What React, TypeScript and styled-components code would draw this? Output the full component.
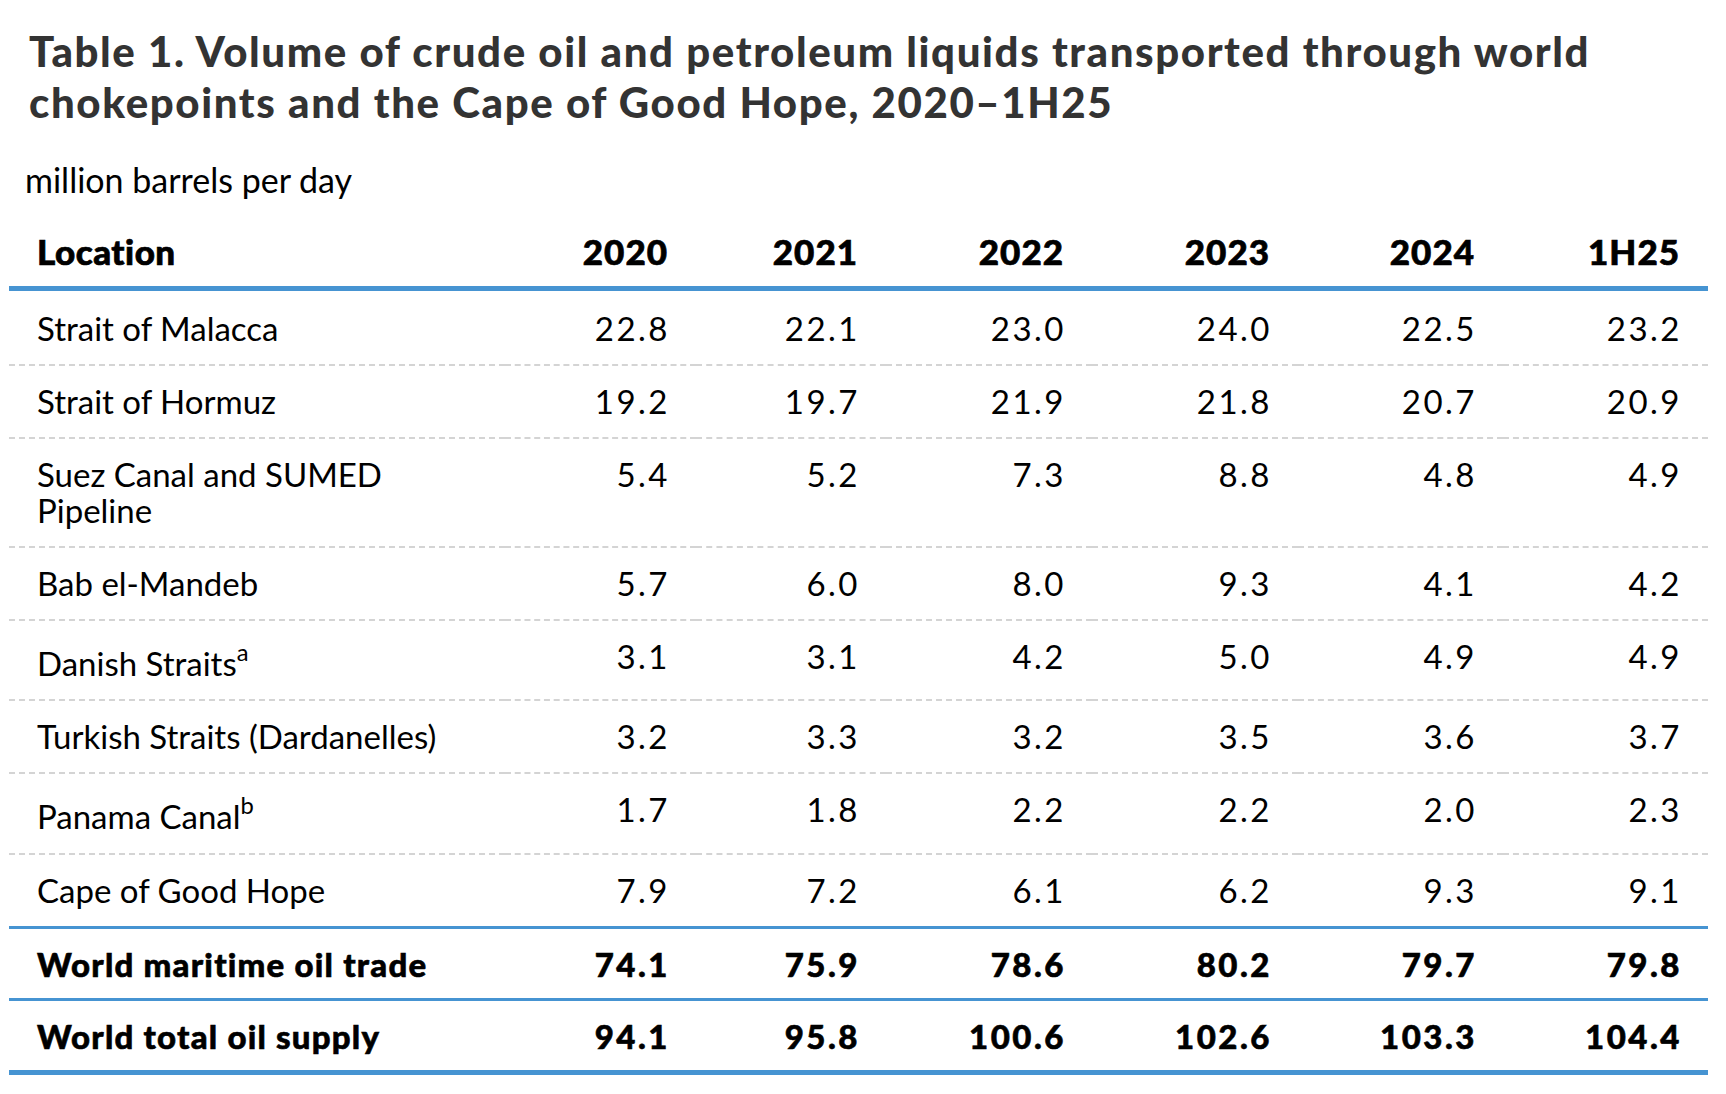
import styled, { createGlobalStyle } from 'styled-components';

const GlobalStyle = createGlobalStyle`
  body {
    margin: 0;
    background: #ffffff;
    font-family: Lato, 'Liberation Sans', sans-serif;
    color: #000;
  }
`;

const Page = styled.div`
  padding: 26px 18px 0 9px;
  width: 1699px;
`;

const Title = styled.h1`
  margin: 0 0 0 20px;
  font-size: 42px;
  line-height: 51px;
  font-weight: 900;
  letter-spacing: 1.6px;
  color: #333333;
`;

const Units = styled.p`
  margin: 32px 0 13px 16px;
  font-size: 34px;
  line-height: 40px;
  font-weight: 400;
`;

const Table = styled.table`
  width: 1699px;
  border-collapse: collapse;
  table-layout: fixed;
`;

const HeadCell = styled.th<{ $first?: boolean }>`
  padding: 18px 28px 15px;
  font-size: 35px;
  line-height: 40px;
  font-weight: 900;
  -webkit-text-stroke: 0.7px #000;
  letter-spacing: ${(p) => (p.$first ? '0.5px' : '1px')};
  text-align: ${(p) => (p.$first ? 'left' : 'right')};
  border-bottom: 5px solid #4694d2;
`;

type Line = 'dashed' | 'blue' | 'thick';

const borders: Record<Line, string> = {
  dashed: '2px dashed #d4d4d4',
  blue: '3px solid #4694d2',
  thick: '5px solid #4694d2',
};

const Row = styled.tr<{ $line: Line; $bold?: boolean }>`
  & > td {
    border-bottom: ${(p) => borders[p.$line]};
    font-weight: ${(p) => (p.$bold ? 900 : 400)};
    -webkit-text-stroke: ${(p) => (p.$bold ? '0.6px #000' : '0')};
    padding-bottom: ${(p) => (p.$bold ? 16 : 18)}px;
  }
  &:first-child > td {
    padding-top: 19px;
  }
`;

const Cell = styled.td<{ $first?: boolean; $bold?: boolean }>`
  padding: 17px ${(p) => (p.$first ? 28 : 26)}px 18px 28px;
  font-size: 33px;
  line-height: 36px;
  vertical-align: top;
  letter-spacing: ${(p) => (p.$first ? (p.$bold ? '1.2px' : '0') : '2.5px')};
  text-align: ${(p) => (p.$first ? 'left' : 'right')};
`;

const Note = styled.sup`
  font-size: 0.72em;
  line-height: 1.2;
  vertical-align: 0.65em;
`;

const widths = [496, 191, 190, 206, 206, 205, 205];
const years = ['2020', '2021', '2022', '2023', '2024', '1H25'];

type Entry = { name: React.ReactNode; values: string[]; line: Line; bold?: boolean };

const rows: Entry[] = [
  { name: 'Strait of Malacca', values: ['22.8', '22.1', '23.0', '24.0', '22.5', '23.2'], line: 'dashed' },
  { name: 'Strait of Hormuz', values: ['19.2', '19.7', '21.9', '21.8', '20.7', '20.9'], line: 'dashed' },
  { name: 'Suez Canal and SUMED Pipeline', values: ['5.4', '5.2', '7.3', '8.8', '4.8', '4.9'], line: 'dashed' },
  { name: 'Bab el-Mandeb', values: ['5.7', '6.0', '8.0', '9.3', '4.1', '4.2'], line: 'dashed' },
  {
    name: (
      <>
        Danish Straits<Note>a</Note>
      </>
    ),
    values: ['3.1', '3.1', '4.2', '5.0', '4.9', '4.9'],
    line: 'dashed',
  },
  { name: 'Turkish Straits (Dardanelles)', values: ['3.2', '3.3', '3.2', '3.5', '3.6', '3.7'], line: 'dashed' },
  {
    name: (
      <>
        Panama Canal<Note>b</Note>
      </>
    ),
    values: ['1.7', '1.8', '2.2', '2.2', '2.0', '2.3'],
    line: 'dashed',
  },
  { name: 'Cape of Good Hope', values: ['7.9', '7.2', '6.1', '6.2', '9.3', '9.1'], line: 'blue' },
  {
    name: 'World maritime oil trade',
    values: ['74.1', '75.9', '78.6', '80.2', '79.7', '79.8'],
    line: 'blue',
    bold: true,
  },
  {
    name: 'World total oil supply',
    values: ['94.1', '95.8', '100.6', '102.6', '103.3', '104.4'],
    line: 'thick',
    bold: true,
  },
];

const App = () => {
  return (
    <Page>
      <GlobalStyle />
      <Title>
        Table 1. Volume of crude oil and petroleum liquids transported through world
        <br />
        chokepoints and the Cape of Good Hope, 2020–1H25
      </Title>
      <Units>million barrels per day</Units>
      <Table>
        <colgroup>
          {widths.map((w, i) => (
            <col key={i} style={{ width: w }} />
          ))}
        </colgroup>
        <thead>
          <tr>
            <HeadCell $first>Location</HeadCell>
            {years.map((y) => (
              <HeadCell key={y}>{y}</HeadCell>
            ))}
          </tr>
        </thead>
        <tbody>
          {rows.map((r, i) => (
            <Row key={i} $line={r.line} $bold={r.bold}>
              <Cell $first $bold={r.bold}>
                {r.name}
              </Cell>
              {r.values.map((v, j) => (
                <Cell key={j} $bold={r.bold}>
                  {v}
                </Cell>
              ))}
            </Row>
          ))}
        </tbody>
      </Table>
    </Page>
  );
};

export default App;
